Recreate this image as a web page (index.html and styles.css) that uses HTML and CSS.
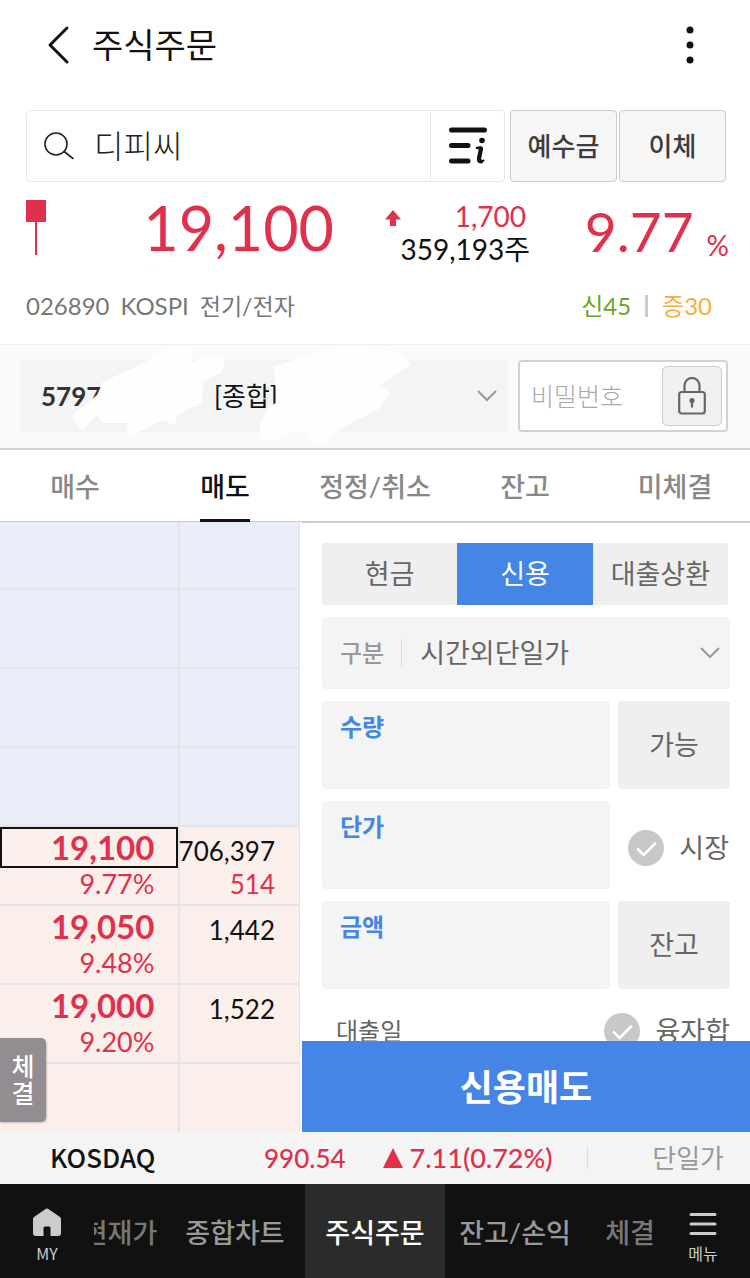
FILE: index.html
```html
<!DOCTYPE html>
<html lang="ko">
<head>
  <meta charset="UTF-8" />
  <meta name="viewport" content="width=device-width, initial-scale=1" />
  <title>주식주문</title>
  <link rel="stylesheet" href="styles.css">
</head>
<body>

<header class="topbar">
  <button class="icon-btn" type="button" aria-label="뒤로">
    <svg width="24" height="40" viewBox="0 0 24 40" fill="none" stroke="#111" stroke-width="3" stroke-linecap="round" stroke-linejoin="round"><path d="M20 3 3 20l17 17"/></svg>
  </button>
  <h1>주식주문</h1>
  <button class="icon-btn more" type="button" aria-label="더보기">
    <svg width="8" height="38" viewBox="0 0 8 38" fill="#111"><circle cx="4" cy="4" r="3.5"/><circle cx="4" cy="19" r="3.5"/><circle cx="4" cy="34" r="3.5"/></svg>
  </button>
</header>

<div class="search-row">
  <div class="search-box">
    <svg width="32" height="30" viewBox="0 0 32 30" fill="none" stroke="#222" stroke-width="1.6" stroke-linecap="round"><circle cx="12" cy="13" r="11"/><path d="M20 20.5 29 27.500"/></svg>
    <input type="text" value="디피씨" aria-label="종목 검색">
    <button class="info-btn" type="button" aria-label="종목 정보">
      <svg width="40" height="40" viewBox="0 0 40 40" fill="none" stroke="#111" stroke-width="5" stroke-linecap="round"><path d="M3.500 4H36.500M3.500 19.500H20M3.500 35H20"/><circle cx="34" cy="14.500" r="2.800" fill="#111" stroke="none"/><path d="M29 22 32.500 21.500" stroke-width="2.500"/><path d="M33 22.500 31 32.500Q30.500 35.500 33 35.300" stroke-width="4.200"/><path d="M33 36Q34.500 35.800 35.500 34.500" stroke-width="2"/></svg>
    </button>
  </div>
  <button class="gray-btn" type="button">예수금</button>
  <button class="gray-btn" type="button">이체</button>
</div>

<section class="quote">
  <div class="quote-price">
    <svg width="20" height="55" viewBox="0 0 20 55" fill="#e1304c"><path d="M0 0h20v22H0zM9 22h2v33H9z"/></svg>
    <strong>19,100</strong>
  </div>
  <div class="quote-change">
    <svg width="16" height="16" viewBox="0 0 16 16" fill="#e1304c"><path d="M8 0 16 9.500H11V16H5V9.500H0z"/></svg>
    <p><span class="up">1,700</span><br>359,193주</p>
  </div>
  <div class="quote-rate"><strong>9.77</strong><span>%</span></div>
</section>

<div class="stock-info">
  <span>026890</span>
  <span>KOSPI</span>
  <span class="sector">전기/전자</span>
  <span class="credit">신45</span>
  <i class="bar"></i>
  <span class="margin">증30</span>
</div>

<section class="account">
  <div class="account-box">
    <label for="account">57971</label>
    <select id="account">
      <option>[종합]</option>
    </select>
    <svg class="chevron" width="20" height="12" viewBox="0 0 20 12" fill="none" stroke="#999" stroke-width="2"><path d="M1 1l9 9 9-9"/></svg>
  </div>
  <div class="password-box">
    <input type="password" placeholder="비밀번호" aria-label="비밀번호">
    <button type="button" aria-label="비밀번호 저장">
      <svg width="28" height="38" viewBox="0 0 28 38" fill="none" stroke="#666" stroke-width="2.200"><rect x="1.200" y="15" width="25.600" height="21.500" rx="2.500"/><path d="M6.500 15V8.500a7.500 7.500 0 0 1 15 0V15"/><circle cx="14" cy="23.500" r="1.500" fill="#555"/><path d="M14 24v6.500"/></svg>
    </button>
  </div>
  <svg class="scribble" viewBox="0 0 340 100" fill="#fefefe">
    <path d="M3 70 27 50 33 37 70 20 90 7 107 0H122V17L143 10 155 15 152 27 133 37 132 57 107 70 105 80 93 75 62 90 57 87 58 78H33L27 70 12 87 5 77z"/>
    <path d="M203 22 243 8 277 0 297 3 333 8 340 20 310 40 320 47 310 63 273 83 253 98 243 97 238 87 217 88 203 97 190 93V77L198 63 207 57 205 33z"/>
  </svg>
</section>

<nav class="tabs">
  <a href="#">매수</a>
  <a href="#" class="active">매도</a>
  <a href="#">정정/취소</a>
  <a href="#">잔고</a>
  <a href="#">미체결</a>
</nav>

<main class="trade">
  <div class="book">
    <table>
      <tbody>
        <tr class="ask first"><td></td><td></td></tr>
        <tr class="ask"><td></td><td></td></tr>
        <tr class="ask"><td></td><td></td></tr>
        <tr class="ask"><td></td><td></td></tr>
        <tr class="current"><td><b>19,100</b><span>9.77%</span></td><td><em>706,397</em><span>514</span></td></tr>
        <tr><td><b>19,050</b><span>9.48%</span></td><td><em>1,442</em></td></tr>
        <tr><td><b>19,000</b><span>9.20%</span></td><td><em>1,522</em></td></tr>
        <tr><td></td><td></td></tr>
      </tbody>
    </table>
    <button class="fills-btn" type="button">체<br>결</button>
  </div>

  <form class="order">
    <div class="order-fields">
      <div class="segment">
        <button type="button">현금</button>
        <button type="button" class="active">신용</button>
        <button type="button">대출상환</button>
      </div>

      <div class="kind">
        <label for="kind">구분</label>
        <select id="kind">
          <option>시간외단일가</option>
        </select>
        <svg class="chevron" width="20" height="12" viewBox="0 0 20 12" fill="none" stroke="#999" stroke-width="2"><path d="M1 1l9 9 9-9"/></svg>
      </div>

      <div class="row">
        <div class="field">
          <label for="qty">수량</label>
          <input type="text" id="qty">
        </div>
        <button class="side-btn" type="button">가능</button>
      </div>

      <div class="row">
        <div class="field">
          <label for="price">단가</label>
          <input type="text" id="price">
        </div>
        <label class="check"><input type="checkbox">시장</label>
      </div>

      <div class="row">
        <div class="field">
          <label for="amount">금액</label>
          <input type="text" id="amount">
        </div>
        <button class="side-btn" type="button">잔고</button>
      </div>

      <div class="row loan">
        <span>대출일</span>
        <label class="check"><input type="checkbox">융자합</label>
      </div>
    </div>
    <button class="submit" type="button">신용매도</button>
  </form>
</main>

<div class="ticker">
  <span class="ticker-name">KOSDAQ</span>
  <span class="ticker-value">990.54</span>
  <span class="ticker-change">
    <svg width="20" height="20" viewBox="0 0 20 20" fill="#e1304c"><path d="M10 0 20 20H0z"/></svg>
    7.11(0.72%)
  </span>
  <span class="ticker-type">단일가</span>
</div>

<nav class="bottom">
  <a href="#" class="bottom-icon">
    <svg width="28" height="28" viewBox="0 0 28 28" fill="#ccc"><path d="M13 .8Q14 0 15 .8L27 9Q28 10 28 11V25Q28 28 25 28H17.500V20Q17.500 18.500 16 18.500H12Q10.500 18.500 10.500 20V28H3Q0 28 0 25V11Q0 10 1 9z"/></svg>
    MY
  </a>
  <div class="bottom-list">
    <a href="#" class="short">현재가</a>
    <a href="#">종합차트</a>
    <a href="#" class="active">주식주문</a>
    <a href="#">잔고/손익</a>
    <a href="#" class="short">체결</a>
  </div>
  <a href="#" class="bottom-icon">
    <svg width="28" height="24" viewBox="0 0 28 24" fill="none" stroke="#ccc" stroke-width="3" stroke-linecap="round"><path d="M2 2.500h24M2 12h24M2 21.500h24"/></svg>
    메뉴
  </a>
</nav>

</body>
</html>
```
FILE: styles.css
```css
* {
  box-sizing: border-box;
}
body {
  margin: 0;
  height: 100vh;
  display: flex;
  flex-direction: column;
  background: #fff;
  color: #111;
  font-family: Lato, "Noto Sans CJK KR", sans-serif;
  font-size: 27px;
  line-height: 36px;
}
button, input, select {
  font: inherit;
  color: inherit;
  margin: 0;
  padding: 0;
  border: 0;
  background: none;
  border-radius: 0;
  outline: none;
}
select {
  appearance: none;
}
a {
  color: inherit;
  text-decoration: none;
}
svg {
  display: block;
  flex: none;
}

/* top bar */
.topbar {
  display: flex;
  align-items: center;
  height: 90px;
  padding: 0 56px 0 47px;
}
.topbar h1 {
  margin: 0 0 0 21px;
  font-size: 34px;
  font-weight: 400;
}
.more {
  margin-left: auto;
}

/* search */
.search-row {
  display: flex;
  gap: 2px;
  height: 72px;
  margin: 20px 24px 0 26px;
}
.search-box {
  flex: 1;
  min-width: 0;
  display: flex;
  align-items: center;
  margin-right: 3px;
  padding-left: 17px;
  border: 1px solid #e8e8e8;
  border-radius: 4px;
}
.search-box input {
  flex: 1;
  min-width: 0;
  margin-left: 18px;
  font-size: 32px;
  font-weight: 300;
  line-height: 40px;
  color: #222;
}
.info-btn {
  display: flex;
  align-items: center;
  justify-content: center;
  width: 74px;
  height: 100%;
  border-left: 1px solid #e8e8e8;
}
.gray-btn {
  width: 107px;
  border: 1px solid #ccc;
  border-radius: 4px;
  background: #f6f6f6;
  font-size: 26px;
  font-weight: 500;
  color: #3c3c3c;
}

/* quote */
.quote {
  display: grid;
  grid-template-columns: 308fr 196fr 199fr;
  margin: 18px 21px 0 26px;
  height: 64px;
  color: #e1304c;
}
.quote strong {
  font-weight: 400;
}
.quote-price {
  display: flex;
  justify-content: space-between;
}
.quote-price strong {
  font-size: 61px;
  line-height: 56px;
}
.quote-change {
  display: flex;
  justify-content: space-between;
  padding: 10px 0 0 51px;
  font-size: 28px;
}
.quote-change p {
  margin: -10px 0 0 -20px;
  text-align: right;
  line-height: 33px;
  white-space: nowrap;
  color: #111;
}
.quote-change .up {
  margin-right: 4px;
  color: #e1304c;
}
.quote-rate {
  display: flex;
  align-items: center;
  justify-content: flex-end;
  gap: 13px;
}
.quote-rate strong {
  font-size: 55px;
  line-height: 60px;
  padding-bottom: 4px;
}
.quote-rate span {
  margin-top: 24px;
  font-size: 28px;
}

.stock-info {
  display: flex;
  align-items: center;
  gap: 11px;
  margin: 24px 38px 20px 26px;
  font-size: 24px;
  color: #777;
}
.sector {
  font-size: 23px;
}
.credit {
  margin-left: auto;
  color: #65a821;
}
.bar {
  width: 3px;
  height: 22px;
  margin: 0 3px;
  background: #ccc;
}
.margin {
  color: #f5ae3c;
}

/* account */
.account {
  position: relative;
  display: flex;
  gap: 10px;
  padding: 15px 22px 16px 20px;
  border-top: 1px solid #eee;
  border-bottom: 2px solid #d2d2d2;
  background: #fafafa;
}
.account-box {
  flex: 1;
  min-width: 0;
  display: flex;
  align-items: center;
  height: 72px;
  padding: 0 11px 0 21px;
  background: #f4f4f4;
  font-size: 26px;
}
.account-box label {
  width: 173px;
  font-weight: 700;
  color: #333;
}
.account-box select {
  flex: 1;
  min-width: 0;
}
.password-box {
  display: flex;
  align-items: center;
  width: 210px;
  padding: 0 4px 0 11px;
  border: 2px solid #d2d2d2;
  border-radius: 4px;
  background: #fff;
}
.password-box input {
  flex: 1;
  min-width: 0;
  font-size: 25px;
  font-weight: 300;
}
.password-box input::placeholder {
  color: #aaa;
}
.password-box button {
  display: flex;
  align-items: center;
  justify-content: center;
  width: 60px;
  height: 60px;
  border: 1px solid #ccc;
  border-radius: 5px;
  background: #f0f0f0;
}
.scribble {
  position: absolute;
  left: 70px;
  top: 0;
  width: 340px;
  height: 100px;
  pointer-events: none;
}

/* order tabs */
.tabs {
  display: grid;
  grid-template-columns: repeat(5, 1fr);
  justify-items: center;
  height: 72px;
  border-bottom: 1px solid #ccc;
  font-weight: 500;
  color: #888;
}
.tabs a {
  height: 72px;
  line-height: 73px;
}
.tabs .active {
  border-bottom: 3px solid #111;
  color: #111;
}

/* trade area */
.trade {
  flex: 1;
  min-height: 0;
  display: flex;
}
.book {
  position: relative;
  width: 40%;
  overflow: hidden;
  border-right: 1px solid #e4e4e4;
}
.book table {
  width: 100%;
  table-layout: fixed;
  border-collapse: collapse;
}
.book td {
  height: 79px;
  padding: 0 24px 0 0;
  border-bottom: 2px solid #e4e4e6;
  background: #fbefec;
  text-align: right;
  vertical-align: top;
  font-size: 26px;
  line-height: 32px;
}
.book td:first-child {
  width: 60%;
  border-right: 2px solid #e4e4e6;
}
.book .ask td {
  background: #e9edf8;
}
.book .first td {
  height: 67px;
}
.book b {
  display: block;
  height: 41px;
  font-size: 33px;
  line-height: 40px;
}
.book .current b {
  margin-right: -24px;
  padding-right: 22px;
  border: 2px solid #111;
  line-height: 36px;
}
.book b, .book span {
  color: #e1304c;
}
.book em {
  display: block;
  margin-left: -2px;
  font-style: normal;
  line-height: 34px;
  padding-top: 7px;
}
.book span {
  display: block;
}
.book b + span {
  font-size: 27px;
}
.fills-btn {
  position: absolute;
  left: 0;
  bottom: 10px;
  width: 46px;
  height: 84px;
  border-radius: 0 5px 5px 0;
  background: #938c91;
  box-shadow: 1px 1px 2px rgba(0, 0, 0, .2);
  font-size: 25px;
  font-weight: 500;
  line-height: 27px;
  color: #fff;
}

/* order form */
.order {
  flex: 1;
  min-width: 0;
  display: flex;
  flex-direction: column;
  margin-left: 2px;
  border-top: 1px solid #ccc;
  color: #666;
}
.order-fields {
  flex: 1;
  min-height: 0;
  display: flex;
  flex-direction: column;
  gap: 12px;
  padding: 20px 20px 0;
  overflow: hidden;
}
.order-fields > * {
  flex: none;
}
.segment {
  display: grid;
  grid-template-columns: repeat(3, 1fr);
  height: 62px;
  margin-right: 2px;
  background: #efefef;
  border-radius: 3px;
}
.segment .active {
  background: #4485e6;
  color: #fff;
}
.kind {
  display: flex;
  align-items: center;
  height: 72px;
  padding: 0 10px 0 18px;
  border-radius: 4px;
  background: #f4f4f4;
}
.kind label {
  padding-right: 17px;
  border-right: 1px solid #ddd;
  font-size: 24px;
  font-weight: 500;
  line-height: 28px;
  color: #999;
}
.kind select {
  flex: 1;
  min-width: 0;
  margin-left: 18px;
}
.row {
  display: flex;
  gap: 8px;
  height: 88px;
}
.field {
  flex: 1;
  min-width: 0;
  display: flex;
  flex-direction: column;
  padding: 8px 18px;
  border-radius: 4px;
  background: #f4f4f4;
}
.field label {
  font-size: 24px;
  font-weight: 700;
  color: #4485e6;
}
.field input {
  width: 100%;
  text-align: right;
}
.side-btn {
  width: 112px;
  border-radius: 4px;
  background: #efefef;
}
.check {
  display: flex;
  align-items: center;
  justify-content: flex-end;
  gap: 15px;
  min-width: 112px;
  padding: 6px 1px 0 0;
  white-space: nowrap;
}
.check input {
  appearance: none;
  display: grid;
  place-items: center;
  width: 36px;
  height: 36px;
  border-radius: 50%;
  background: #c8c8c8;
}
.check input::after {
  content: "";
  width: 16px;
  height: 8px;
  margin-bottom: 4px;
  border: solid #fff;
  border-width: 0 0 3px 3px;
  border-radius: 1px;
  transform: rotate(-45deg);
}
.loan {
  align-items: center;
  justify-content: space-between;
  height: 60px;
  padding-left: 14px;
}
.loan .check {
  padding: 0;
}
.loan span {
  font-size: 24px;
}
.submit {
  height: 91px;
  background: #4485e6;
  font-size: 36px;
  font-weight: 700;
  color: #fff;
}

/* index ticker */
.ticker {
  display: flex;
  align-items: center;
  height: 52px;
  padding: 0 26px 0 50px;
  background: #f4f4f4;
  font-size: 26px;
}
.ticker-name {
  width: 214px;
  font-family: "Noto Sans CJK KR", sans-serif;
  font-weight: 500;
  line-height: 34px;
  padding-bottom: 2px;
}
.ticker-value, .ticker-change {
  font-weight: 500;
  color: #e1304c;
}
.ticker-change {
  display: flex;
  align-items: center;
  gap: 7px;
  margin-left: 37px;
  font-size: 27px;
}
.ticker-type {
  flex: 1;
  margin-left: 34px;
  border-left: 1px solid #ddd;
  line-height: 22px;
  text-align: right;
  color: #999;
}

/* bottom menu */
.bottom {
  display: flex;
  height: 94px;
  background: #111;
  color: #999;
  font-weight: 500;
}
.bottom-icon {
  display: flex;
  flex-direction: column;
  align-items: center;
  justify-content: flex-end;
  gap: 7px;
  width: 94px;
  padding-bottom: 15px;
  font-family: "Noto Sans CJK KR", sans-serif;
  font-size: 16px;
  font-weight: 400;
  line-height: 20px;
  color: #ccc;
}
.bottom-list {
  flex: 1;
  min-width: 0;
  display: flex;
  justify-content: center;
  overflow: hidden;
}
.bottom-list a {
  flex: none;
  width: 140px;
  text-align: center;
  line-height: 97px;
}
.bottom-list .short {
  width: 90px;
  color: #777;
}
.bottom-list .active {
  background: #2b2b2b;
  color: #fff;
}
```
